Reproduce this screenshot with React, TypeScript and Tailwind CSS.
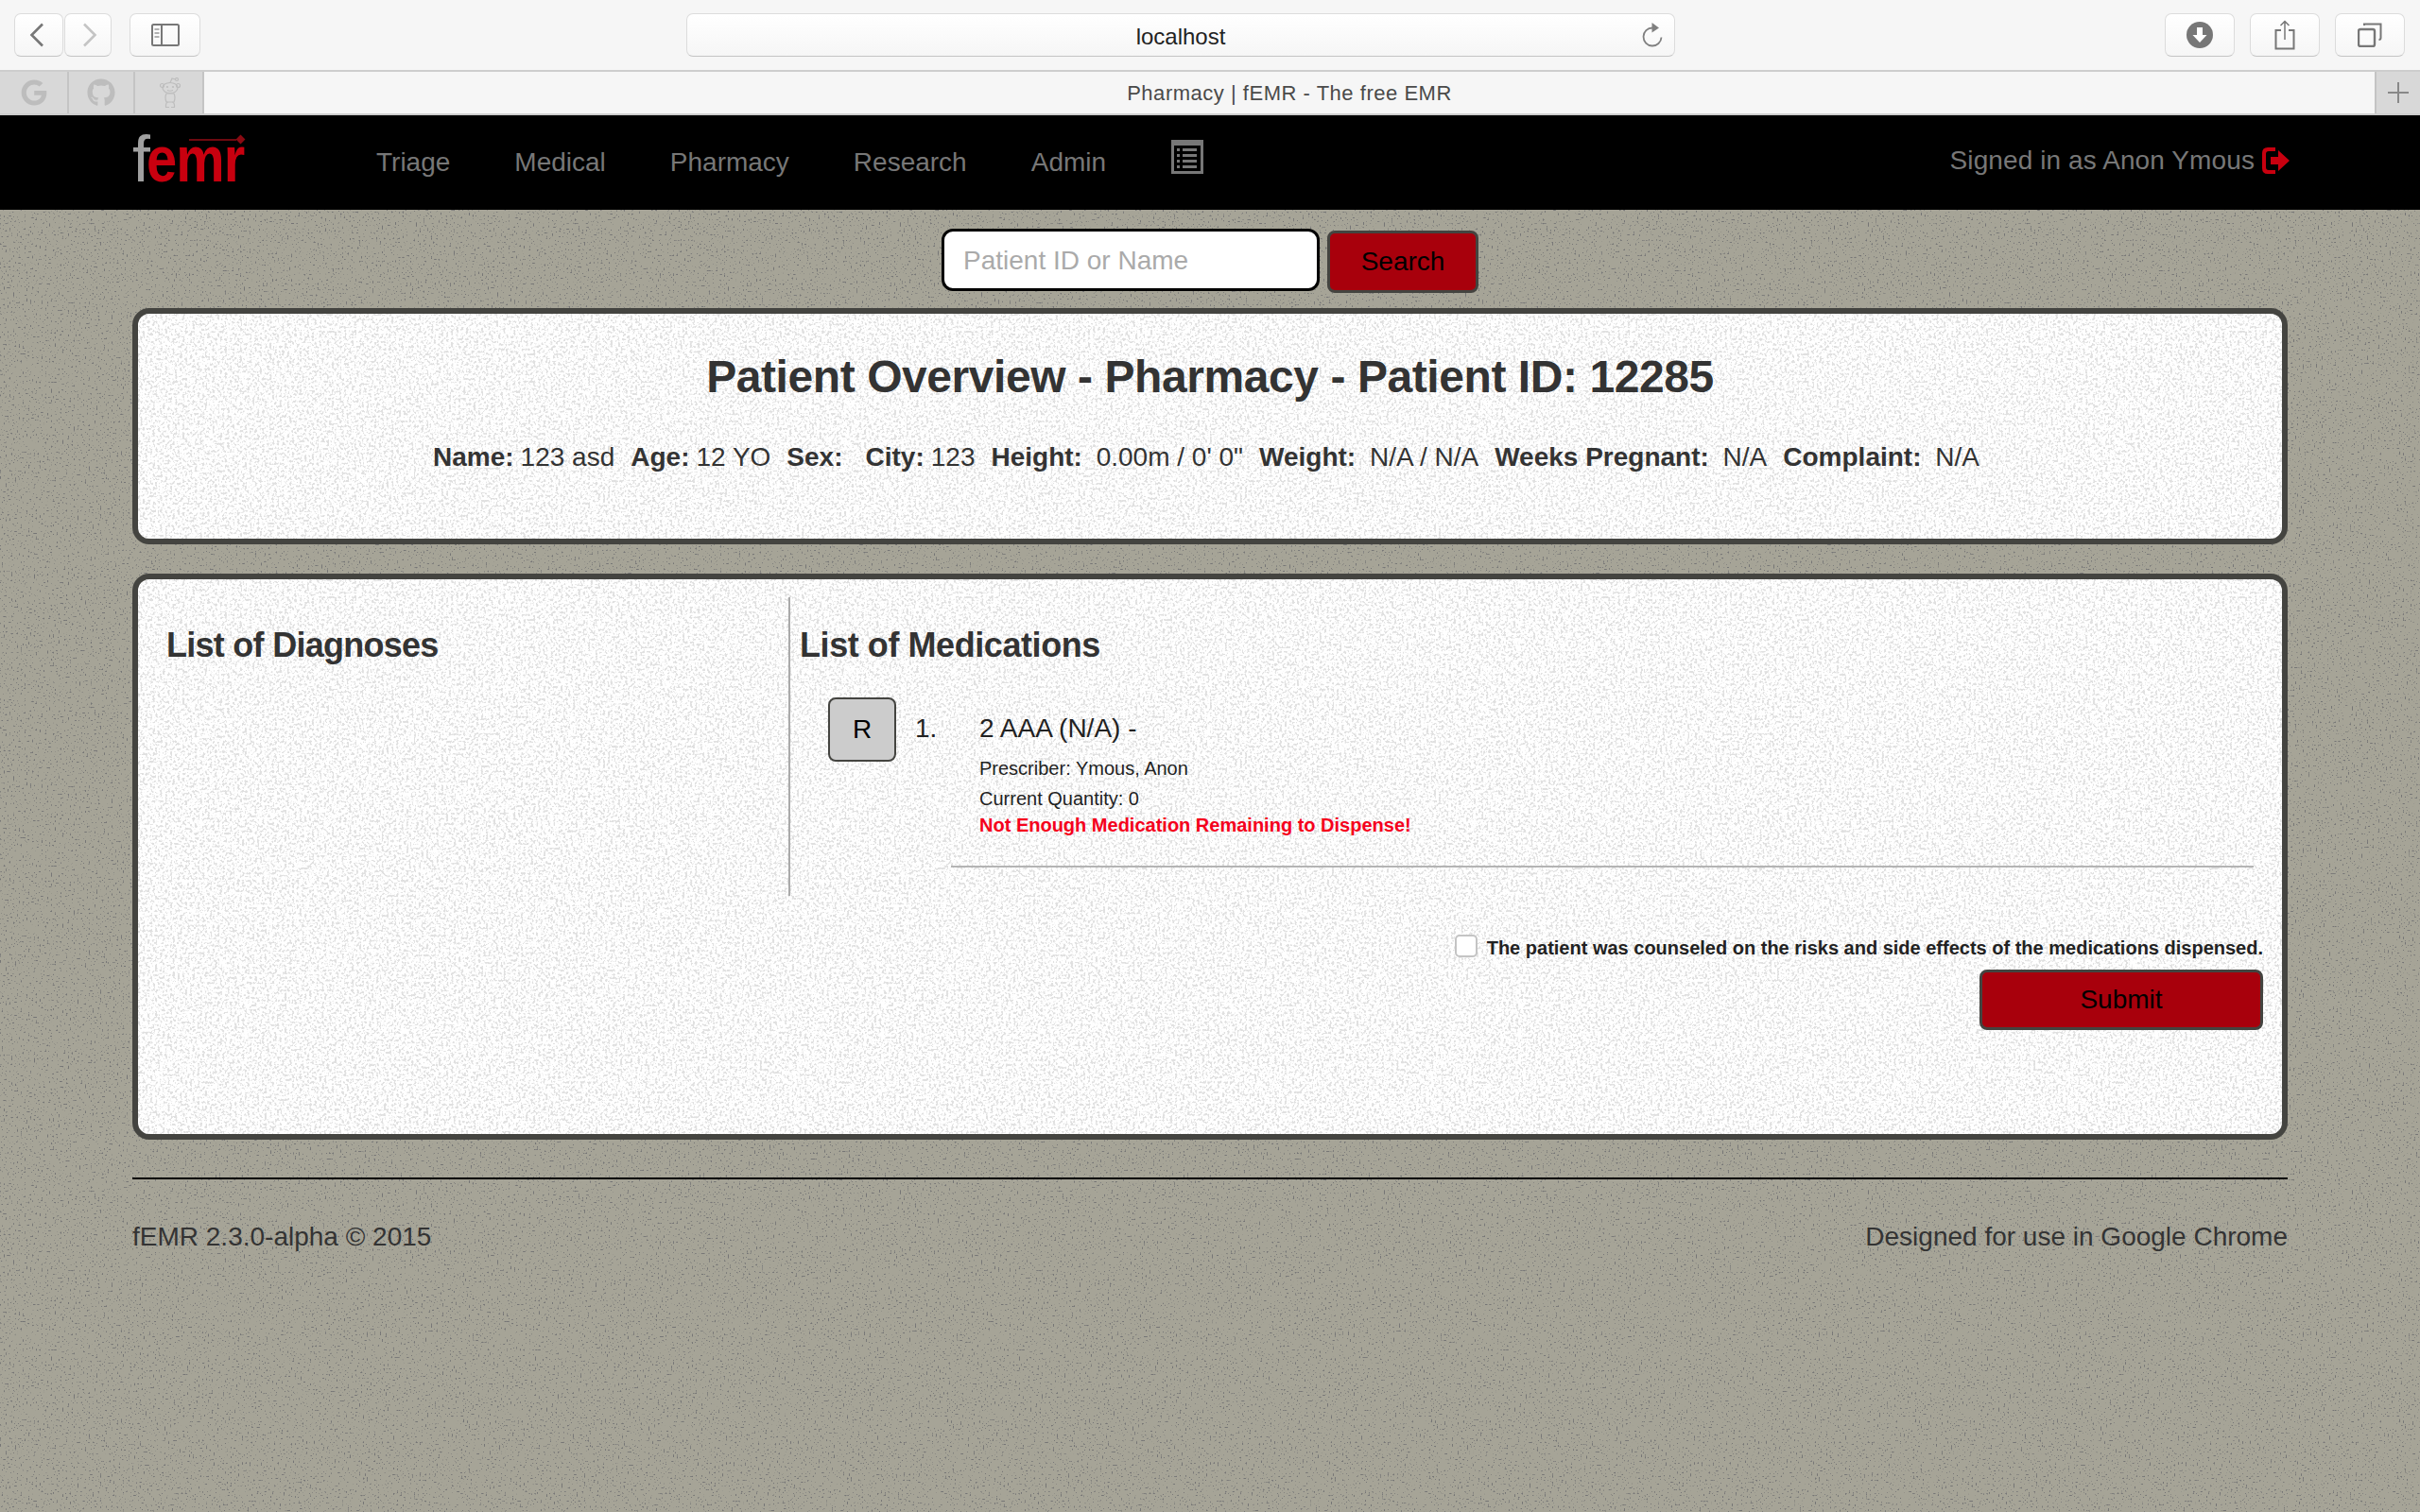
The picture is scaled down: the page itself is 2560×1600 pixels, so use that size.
import React from 'react';
import { FaGoogle, FaGithub } from 'react-icons/fa';

const sans = 'font-["Liberation_Sans",Arial,sans-serif]';

// speckled paper used on page + panels
const Speckle = ({ id, color, freq, slope, cut }: { id: string; color: string; freq: number; slope: number; cut: number }) => (
  <svg className="absolute inset-0 w-full h-full pointer-events-none" aria-hidden="true">
    <filter id={id} x="0" y="0" width="100%" height="100%" colorInterpolationFilters="sRGB">
      <feTurbulence type="fractalNoise" baseFrequency={freq} numOctaves={2} seed={4} />
      <feColorMatrix type="matrix" values={`0 0 0 0 ${color} 0 0 0 0 ${color} 0 0 0 0 ${color} ${slope} 0 0 0 ${cut}`} />
    </filter>
    <rect width="100%" height="100%" filter={`url(#${id})`} />
  </svg>
);

const ToolButton = ({ className, children }: { className: string; children?: React.ReactNode }) => (
  <div className={`h-[46px] flex items-center justify-center rounded-[7px] border border-[#dcdcdc] border-b-[#c4c4c4] bg-gradient-to-b from-white to-[#f6f6f6] ${className}`}>
    {children}
  </div>
);

const BrowserBar = () => (
  <div className="h-[74px] bg-[#f6f6f6] flex items-center pl-[15px] pr-[16px]">
    <ToolButton className="w-[52px] pr-[5px]">
      <svg width="16" height="26" viewBox="0 0 16 26" fill="none" stroke="#777" strokeWidth="2.6"><path d="M14 1.5 2.5 13 14 24.5" /></svg>
    </ToolButton>
    <ToolButton className="w-[50px] ml-px pl-[3px]">
      <svg width="16" height="26" viewBox="0 0 16 26" fill="none" stroke="#c4c4c4" strokeWidth="2.6"><path d="M2 1.5 13.500 13 2 24.5" /></svg>
    </ToolButton>
    <ToolButton className="w-[75px] ml-[19px]">
      <svg width="30" height="24" viewBox="0 0 30 24" fill="none" stroke="#777" strokeWidth="2"><rect x="1" y="1" width="28" height="22" rx="1.500" /><path d="M11 1v22" /><path d="M3.500 6h5M3.500 10h5M3.500 14h5" strokeWidth="1.500" stroke="#999" /></svg>
    </ToolButton>
    <ToolButton className="w-[1046px] ml-[514px] relative pt-[3px]">
      <span className={`${sans} text-[24px] text-[#222]`}>localhost</span>
      <svg className="absolute right-[12px] top-[8px]" width="24" height="28" viewBox="0 0 24 28" fill="none" stroke="#808080" strokeWidth="1.800">
        <path d="M13 6.500a9.500 9.500 0 1 0 9.500 10" />
        <path d="M12.500 1 20 6.500l-7.500 5z" fill="#808080" stroke="none" />
      </svg>
    </ToolButton>
    <ToolButton className="w-[74px] ml-[518px]">
      <svg width="28" height="28" viewBox="0 0 28 28"><circle cx="14" cy="14" r="14" fill="#777" /><path d="M11 6h6v8h4.500L14 22 6.500 14H11z" fill="#fff" /></svg>
    </ToolButton>
    <ToolButton className="w-[74px] ml-[16px]">
      <svg width="22" height="32" viewBox="0 0 22 32" fill="none" stroke="#777" strokeWidth="2"><path d="M7 11H1.500v19.500h19V11H15" /><path d="M11 21V1.500M6.500 6 11 1.500 15.500 6" strokeWidth="1.500" /></svg>
    </ToolButton>
    <ToolButton className="w-[74px] ml-[16px]">
      <svg width="26" height="26" viewBox="0 0 26 26" fill="none" stroke="#777" strokeWidth="2"><rect x="1" y="7" width="17" height="18" rx="2" strokeWidth="2.400" /><path d="M7 3V1.500h17.500V16c0 1-.5 2-2 2" /></svg>
    </ToolButton>
  </div>
);

const Snoo = () => (
  <svg width="24" height="33" viewBox="0 0 24 33" fill="none" stroke="#bdbdbd" strokeWidth="1.200">
    <ellipse cx="12" cy="11" rx="8" ry="5.500" fill="#d8d8d8" />
    <circle cx="3.500" cy="8.500" r="2" /><circle cx="20.500" cy="8.500" r="2" />
    <circle cx="19" cy="2" r="1.500" />
    <path d="M12 5.500 14 1l3.500 1" />
    <circle cx="9" cy="10" r="1.100" fill="#bdbdbd" stroke="none" /><circle cx="15" cy="10" r="1.100" fill="#bdbdbd" stroke="none" />
    <path d="M9 13.500q3 1.500 6 0" />
    <path d="M8 17q-2 4 0 9h8q2-5 0-9z" />
    <path d="M7.500 31.500V29q0-2 2-3M16.500 31.500V29q0-2-2-3M7 31.500h4M13 31.500h4" />
  </svg>
);

const TabBar = () => (
  <div className="h-[48px] flex border-y-2 border-[#cdcdcd] bg-[#f6f6f6]">
    <div className="w-[73px] flex items-center justify-center bg-[#d8d8d8] border-r-2 border-[#c4c4c4]"><FaGoogle size={28} color="#bdbdbd" /></div>
    <div className="w-[70px] flex items-center justify-center bg-[#d8d8d8] border-r-2 border-[#c4c4c4]"><FaGithub size={30} color="#bdbdbd" /></div>
    <div className="w-[73px] flex items-center justify-center bg-[#d8d8d8] border-r-2 border-[#c4c4c4] pl-[2px]"><Snoo /></div>
    <div className={`flex-1 flex items-center justify-center ${sans} text-[22px] text-[#4a4a4a] tracking-[0.52px]`}>Pharmacy | fEMR - The free EMR</div>
    <div className="w-[48px] flex items-center justify-center bg-[#d8d8d8] border-l-2 border-[#c4c4c4]">
      <svg width="24" height="24" viewBox="0 0 24 24" stroke="#888" strokeWidth="2"><path d="M12 1v22M1 12h22" /></svg>
    </div>
  </div>
);

const Logo = () => (
  <div className={`relative w-[120px] h-[50px] ${sans}`}>
    <span className="absolute left-0 top-[-13px] text-[68px] leading-[68px] text-[#a0a0a0]">f</span>
    <span className="absolute left-[15px] top-[-13px] text-[68px] leading-[68px] font-bold text-[#c8000f] tracking-[-1px] scale-x-[0.85] origin-left">emr</span>
    <div className="absolute left-[60px] top-0 w-[50px] h-[2px] bg-[#6d0a10]" />
    <div className="absolute left-[111px] top-[-3px] w-[7px] h-[7px] bg-[#8a0a12] rotate-45" />
  </div>
);

const NavBar = () => (
  <div className={`h-[100px] bg-black flex items-center pl-[140px] pr-[137px] ${sans} text-[28px] text-[#777]`}>
    <Logo />
    <nav className="flex items-center ml-[138px] gap-[68px]">
      <span>Triage</span>
      <span>Medical</span>
      <span>Pharmacy</span>
      <span>Research</span>
      <span>Admin</span>
      {/* solid header bar, dotted rows */}
      <svg width="34" height="36" viewBox="0 0 34 36" fill="#777" className="-mt-[13px] ml-[1px]">
        <path fillRule="evenodd" d="M0 0h34v36H0zM3 6v27h28V6z" />
        <path d="M6 9h3v3H6zM12 9h15v3H12zM6 15h3v3H6zM12 15h15v3H12zM6 21h3v3H6zM12 21h15v3H12zM6 27h3v3H6zM12 27h15v3H12z" />
      </svg>
    </nav>
    <div className="ml-auto flex items-center gap-[8px] -mt-[4px]">
      <span className="tracking-[0.1px]">Signed in as Anon Ymous</span>
      <svg width="30" height="28" viewBox="0 0 30 28" fill="#c8000f"><path d="M14 0H6Q0 0 0 6v16q0 6 6 6h8v-4H7q-3 0-3-3V7q0-3 3-3h7z" /><path d="M9 10h8V3l12 11-12 11v-7H9z" /></svg>
    </div>
  </div>
);

const Panel = ({ id, className, children }: { id: string; className: string; children: React.ReactNode }) => (
  <div className={`relative mx-[140px] border-[6px] border-[#444440] rounded-[18px] bg-white overflow-hidden ${className}`}>
    <Speckle id={id} color="0.88" freq={0.38} slope={8} cut={-4.100} />
    <div className="relative h-full">{children}</div>
  </div>
);

const Field = ({ label, value, className = '' }: { label: string; value?: string; className?: string }) => (
  <span className={className}><b>{label}</b>{value ? <span className="ml-[7px]">{value}</span> : null}</span>
);

export default function App() {
  return (
    <div className={`relative min-h-[1600px] bg-[#a6a497] ${sans}`}>
      <Speckle id="page-noise" color="0.46" freq={0.5} slope={10} cut={-6.400} />
      <div className="relative">
        <BrowserBar />
        <TabBar />
        <NavBar />

        <div className="flex justify-center items-start gap-[8px] h-[104px] pt-[20px]">
          <input
            placeholder="Patient ID or Name"
            className="w-[400px] h-[66px] px-[20px] pt-[2px] bg-white border-[3px] border-black rounded-[12px] text-[28px] text-[#333] placeholder:text-[#aaa] outline-none"
          />
          <button className="mt-[2px] w-[160px] h-[66px] bg-[#a8000c] border-[3px] border-[#444440] rounded-[8px] text-[28px] text-black">Search</button>
        </div>

        <Panel id="panel-a" className="h-[250px]">
          <div className="text-center text-[#333]">
            <h1 className="pt-[39px] text-[48px] leading-[56px] font-bold tracking-[-0.43px]">Patient Overview - Pharmacy - Patient ID: 12285</h1>
            <div className="mt-[39px] pr-[8px] text-[28px] leading-[36px] flex justify-center gap-[17px]">
              <Field label="Name:" value="123 asd" />
              <Field label="Age:" value="12 YO" />
              <Field label="Sex:" className="mr-[7px]" />
              <Field label="City:" value="123" />
              <Field label="Height:" value=" 0.00m / 0' 0&quot;" />
              <Field label="Weight:" value=" N/A / N/A" />
              <Field label="Weeks Pregnant:" value=" N/A" />
              <Field label="Complaint:" value=" N/A" />
            </div>
          </div>
        </Panel>

        <Panel id="panel-b" className="mt-[31px] h-[599px]">
          <div className="flex pt-[19px] h-[340px]">
            <div className="w-[690px] h-[316px] border-r-2 border-[#aaa] pl-[30px] pt-[29px]">
              <h2 className="text-[36px] leading-[44px] font-bold text-[#333] tracking-[-0.73px]">List of Diagnoses</h2>
            </div>
            <div className="flex-1 pl-[10px] pt-[29px] pr-[30px] text-[#222]">
              <h2 className="text-[36px] leading-[44px] font-bold text-[#333] tracking-[-0.43px]">List of Medications</h2>
              <div className="flex mt-[33px] ml-[30px]">
                <button className="w-[72px] h-[68px] bg-[#ccc] border-2 border-[#444440] rounded-[8px] text-[28px] text-black">R</button>
                <span className="ml-[20px] mt-[17px] w-[68px] text-[28px] leading-[32px]">1.</span>
                <div className="mt-[17px]">
                  <div className="text-[28px] leading-[32px]">2 AAA (N/A) -</div>
                  <div className="mt-[14px] text-[20px] leading-[24px]">Prescriber: Ymous, Anon</div>
                  <div className="mt-[8px] text-[20px] leading-[24px]">Current Quantity: 0</div>
                  <div className="mt-[4px] text-[20px] leading-[24px] font-bold text-[#f5001c]">Not Enough Medication Remaining to Dispense!</div>
                </div>
              </div>
              <div className="ml-[160px] mt-[31px] h-[2px] bg-[#b4b4b4]" />
            </div>
          </div>
          <div className="flex flex-col items-end pr-[20px] mt-[38px]">
            <label className="flex items-center gap-[10px] text-[20px] font-bold text-[#222] leading-[24px]">
              <span className="w-[24px] h-[24px] bg-white border-2 border-[#c4c4c4] rounded-[5px] -mt-[4px]" />
              The patient was counseled on the risks and side effects of the medications dispensed.
            </label>
            <button className="mt-[11px] w-[300px] h-[64px] bg-[#a8000c] border-[3px] border-[#444440] rounded-[8px] text-[28px] text-black">Submit</button>
          </div>
        </Panel>

        <div className="mx-[140px] mt-[40px] border-t-2 border-black pt-[43px] flex justify-between text-[28px] leading-[36px] text-[#333]">
          <span>fEMR 2.3.0-alpha © 2015</span>
          <span>Designed for use in Google Chrome</span>
        </div>
      </div>
    </div>
  );
}
